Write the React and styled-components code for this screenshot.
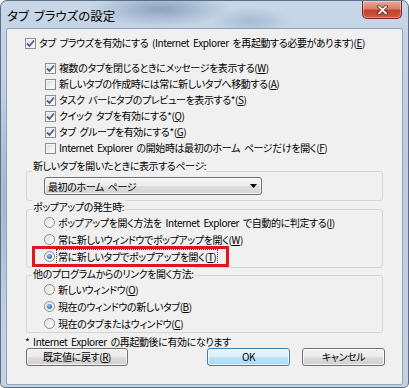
import React from 'react';
import styled, { createGlobalStyle } from 'styled-components';

const GlobalStyle = createGlobalStyle`
  html, body {
    margin: 0;
    padding: 0;
    background: #ffffff;
  }
  body {
    font-family: "Noto Sans CJK JP", "Noto Sans", sans-serif;
    font-feature-settings: "palt";
    color: #000;
  }
`;

const Window = styled.div`
  width: 409px;
  height: 388px;
  box-sizing: border-box;
  display: flex;
  flex-direction: column;
  border: 1px solid #5d6f84;
  border-radius: 7px 7px 5px 5px;
  overflow: hidden;
  background:
    radial-gradient(ellipse 70px 18px at 160px 8px, rgba(92, 120, 156, 0.55), transparent),
    radial-gradient(ellipse 40px 14px at 250px 20px, rgba(120, 146, 178, 0.4), transparent),
    radial-gradient(ellipse 6px 120px at 3px 200px, rgba(110, 135, 165, 0.35), transparent),
    linear-gradient(180deg, #c7d7e8 0%, #bccde0 40%, #c3d3e4 100%);
`;

const TitleBar = styled.div`
  height: 27px;
  flex: none;
  display: flex;
  align-items: flex-start;
  justify-content: space-between;
  padding-left: 6px;
`;

const Title = styled.span`
  font-size: 12.5px;
  line-height: 14px;
  margin-top: 8px;
  word-spacing: 2px;
`;

const CloseButton = styled.div`
  width: 40px;
  height: 18px;
  margin-right: 6px;
  box-sizing: border-box;
  border: 1px solid #6d2a22;
  border-top: none;
  border-radius: 0 0 5px 5px;
  background: linear-gradient(180deg, #e9a99b 0%, #d8806c 45%, #c1402a 55%, #cf5a3e 100%);
  box-shadow: inset 0 0 0 1px rgba(255, 255, 255, 0.35);
  display: flex;
  align-items: center;
  justify-content: center;
`;

const Client = styled.div`
  flex: 1;
  margin: 0 5px 2px 5px;
  box-sizing: border-box;
  border: 1px solid #8fa2b8;
  border-radius: 2px;
  background: #f0f0f0;
  padding: 6px 16px 0 18px;
  font-size: 10px;
  letter-spacing: -0.4px;
  word-spacing: 2px;
`;

const Row = styled.div`
  position: relative;
  display: flex;
  align-items: center;
  height: ${(p) => p.$h || 16}px;
  gap: 2px;
  white-space: nowrap;
`;

const SubList = styled.div`
  margin: 9px 0 0 20px;
`;

const Box = styled.span`
  width: 11px;
  height: 11px;
  flex: none;
  box-sizing: border-box;
  border: 1px solid #8e8f8f;
  background: linear-gradient(135deg, #dcdcdc 0%, #f6f6f6 70%, #ffffff 100%);
  box-shadow: inset 0 0 0 1px #f4f4f4;
  display: flex;
  align-items: center;
  justify-content: center;
`;

const Circle = styled(Box)`
  border-radius: 50%;
  border-color: #8a8a8a;
`;

const Dot = styled.span`
  width: 5px;
  height: 5px;
  border-radius: 50%;
  background: radial-gradient(circle at 40% 35%, #9cc6f0 0%, #3a7cc7 55%, #1b4f91 100%);
`;

const Label = styled.span`
  line-height: 14px;
  padding: 0 1px;
  border: 1px dotted ${(p) => (p.$focus ? '#444' : 'transparent')};
  margin-left: -1px;
`;

const Key = styled.u`
  text-decoration: underline;
`;

const Group = styled.div`
  margin: ${(p) => p.$mt}px 3px 0 1px;
  border: 1px solid #d5d5d5;
  border-radius: 3px;
  padding: 0 0 ${(p) => p.$pb || 0}px 0;
`;

const Caption = styled.div`
  margin: ${(p) => p.$mt}px 0 0 5px;
  width: fit-content;
  padding: 0 1px;
  line-height: 14px;
  background: #f0f0f0;
`;

const Select = styled.div`
  margin: 4px 0 0 17px;
  width: 218px;
  height: 18px;
  box-sizing: border-box;
  border: 1px solid #707070;
  border-radius: 3px;
  background: linear-gradient(180deg, #f4f4f4 0%, #ececec 48%, #dedede 52%, #d3d3d3 100%);
  box-shadow: inset 0 0 0 1px rgba(255, 255, 255, 0.7);
  display: flex;
  align-items: center;
  justify-content: space-between;
  padding: 0 4px 0 3px;
`;

const RadioList = styled.div`
  margin-left: 17px;
`;

const Highlight = styled.span`
  position: absolute;
  left: -12px;
  top: -2px;
  width: 197px;
  height: 21px;
  box-sizing: border-box;
  border: 3px solid #e3141c;
  pointer-events: none;
`;

const Note = styled.div`
  margin-top: 3px;
  line-height: 12px;
`;

const ButtonRow = styled.div`
  display: flex;
  align-items: center;
  gap: 12px;
  margin: 0 1px 0 1px;
`;

const Button = styled.div`
  width: ${(p) => p.$w}px;
  height: 18px;
  box-sizing: border-box;
  border: 1px solid ${(p) => (p.$default ? '#3c7fb1' : '#707070')};
  border-radius: 3px;
  background: ${(p) =>
    p.$default
      ? 'linear-gradient(180deg, #eaf6fd 0%, #d9f0fc 48%, #bee6fd 52%, #a7d9f5 100%)'
      : 'linear-gradient(180deg, #f2f2f2 0%, #ebebeb 48%, #dddddd 52%, #cfcfcf 100%)'};
  box-shadow: inset 0 0 0 1px rgba(255, 255, 255, 0.75);
  display: flex;
  align-items: center;
  justify-content: center;
  line-height: 14px;
  margin-left: ${(p) => (p.$push ? 'auto' : '0')};
`;

function Check({ checked }) {
  return (
    <Box>
      {checked && (
        <svg width="9" height="9" viewBox="0 0 9 9">
          <path d="M1 4.5 L3.5 7 L8 1.5" fill="none" stroke="#4a5f8c" strokeWidth="1.8" />
        </svg>
      )}
    </Box>
  );
}

function Radio({ checked }) {
  return <Circle>{checked && <Dot />}</Circle>;
}

function CheckRow({ checked, children }) {
  return (
    <Row>
      <Check checked={checked} />
      <Label>{children}</Label>
    </Row>
  );
}

function RadioRow({ checked, focus, marked, children }) {
  return (
    <Row $h={17}>
      <Radio checked={checked} />
      <Label $focus={focus}>{children}</Label>
      {marked && <Highlight />}
    </Row>
  );
}

const subOptions = [
  { text: '複数のタブを閉じるときにメッセージを表示する', key: 'W', checked: true },
  { text: '新しいタブの作成時には常に新しいタブへ移動する', key: 'A', checked: false },
  { text: 'タスク バーにタブのプレビューを表示する*', key: 'S', checked: true },
  { text: 'クイック タブを有効にする*', key: 'Q', checked: true },
  { text: 'タブ グループを有効にする*', key: 'G', checked: true },
  { text: 'Internet Explorer の開始時は最初のホーム ページだけを開く', key: 'F', checked: false },
];

const popupOptions = [
  { text: 'ポップアップを開く方法を Internet Explorer で自動的に判定する', key: 'I' },
  { text: '常に新しいウィンドウでポップアップを開く', key: 'W' },
  { text: '常に新しいタブでポップアップを開く', key: 'T', checked: true, focus: true, marked: true },
];

const linkOptions = [
  { text: '新しいウィンドウ', key: 'O' },
  { text: '現在のウィンドウの新しいタブ', key: 'B', checked: true },
  { text: '現在のタブまたはウィンドウ', key: 'C' },
];

export default function App() {
  return (
    <>
      <GlobalStyle />
      <Window>
        <TitleBar>
          <Title>タブ ブラウズの設定</Title>
          <CloseButton>
            <svg width="11" height="10" viewBox="0 0 11 10">
              <path d="M2 1.5 L9 8.5 M9 1.5 L2 8.5" stroke="#5a1a12" strokeWidth="3.4" strokeLinecap="square" />
              <path d="M2 1.5 L9 8.5 M9 1.5 L2 8.5" stroke="#ffffff" strokeWidth="1.8" strokeLinecap="square" />
            </svg>
          </CloseButton>
        </TitleBar>
        <Client>
          <CheckRow checked>
            タブ ブラウズを有効にする (Internet Explorer を再起動する必要があります)(<Key>E</Key>)
          </CheckRow>
          <SubList>
            {subOptions.map((o) => (
              <CheckRow key={o.key} checked={o.checked}>
                {o.text}(<Key>{o.key}</Key>)
              </CheckRow>
            ))}
          </SubList>

          <Group $mt={15} $pb={5}>
            <Caption $mt={-13}>新しいタブを開いたときに表示するページ:</Caption>
            <Select>
              <span>最初のホーム ページ</span>
              <svg width="7" height="4" viewBox="0 0 7 4">
                <path d="M0 0 H7 L3.5 4 Z" fill="#000" />
              </svg>
            </Select>
          </Group>

          <Group $mt={8} $pb={2}>
            <Caption $mt={-10}>ポップアップの発生時:</Caption>
            <RadioList>
              {popupOptions.map((o) => (
                <RadioRow key={o.key} checked={o.checked} focus={o.focus} marked={o.marked}>
                  {o.text}(<Key>{o.key}</Key>)
                </RadioRow>
              ))}
            </RadioList>
          </Group>

          <Group $mt={7} $pb={0}>
            <Caption $mt={-9}>他のプログラムからのリンクを開く方法:</Caption>
            <RadioList>
              {linkOptions.map((o) => (
                <RadioRow key={o.key} checked={o.checked}>
                  {o.text}(<Key>{o.key}</Key>)
                </RadioRow>
              ))}
            </RadioList>
          </Group>

          <Note>* Internet Explorer の再起動後に有効になります</Note>
          <ButtonRow>
            <Button $w={102}>
              既定値に戻す(<Key>R</Key>)
            </Button>
            <Button $w={83} $default $push>
              OK
            </Button>
            <Button $w={83}>キャンセル</Button>
          </ButtonRow>
        </Client>
      </Window>
    </>
  );
}
